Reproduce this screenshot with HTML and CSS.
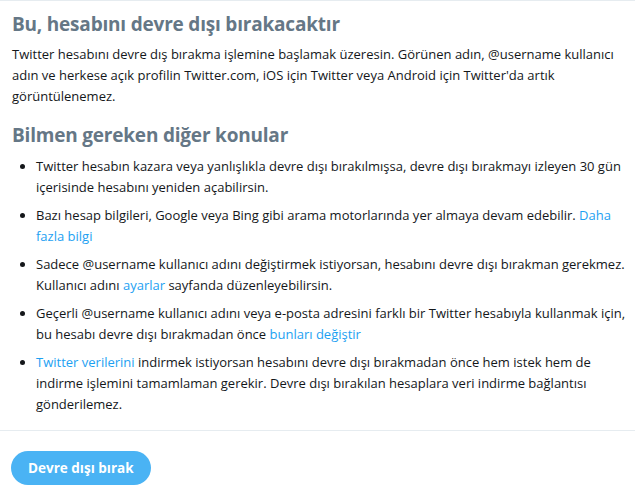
FILE: index.html
```html
<!DOCTYPE html>
<html lang="tr">
<head>
    <meta charset="UTF-8">
    <title>Hesabını devre dışı bırak</title>
    <link rel="stylesheet" href="styles.css">
</head>
<body>
    <div class="panel">
        <!-- Intro -->
        <section class="content">
            <h1>Bu, hesabını devre dışı bırakacaktır</h1>
            <p class="lead">Twitter hesabını devre dış bırakma işlemine başlamak üzeresin. Görünen adın, @username kullanıcı adın ve herkese açık profilin Twitter.com, iOS için Twitter veya Android için Twitter'da artık görüntülenemez.</p>

            <h2>Bilmen gereken diğer konular</h2>
            <ul class="notes">
                <li>Twitter hesabın kazara veya yanlışlıkla devre dışı bırakılmışsa, devre dışı bırakmayı izleyen 30 gün içerisinde hesabını yeniden açabilirsin.</li>
                <li>Bazı hesap bilgileri, Google veya Bing gibi arama motorlarında yer almaya devam edebilir. <a href="#">Daha fazla bilgi</a></li>
                <li>Sadece @username kullanıcı adını değiştirmek istiyorsan, hesabını devre dışı bırakman gerekmez. Kullanıcı adını <a href="#">ayarlar</a> sayfanda düzenleyebilirsin.</li>
                <li>Geçerli @username kullanıcı adını veya e-posta adresini farklı bir Twitter hesabıyla kullanmak için, bu hesabı devre dışı bırakmadan önce <a href="#">bunları değiştir</a></li>
                <li><a href="#">Twitter verilerini</a> indirmek istiyorsan hesabını devre dışı bırakmadan önce hem istek hem de indirme işlemini tamamlaman gerekir. Devre dışı bırakılan hesaplara veri indirme bağlantısı gönderilemez.</li>
            </ul>
        </section>

        <!-- Action -->
        <div class="actions">
            <button class="btn-primary" type="button">Devre dışı bırak</button>
        </div>
    </div>
</body>
</html>
```

FILE: styles.css
```css
/* General Styles */
body {
    margin: 0;
    padding: 0;
    font-family: 'Open Sans', 'Noto Sans', sans-serif;
    font-size: 13px;
    color: #14171a;
    background: #fff;
}
.panel {
    border-top: 1px solid #e6ecf0;
}
a {
    color: #1da1f2;
    text-decoration: none;
}

/* Content */
.content {
    padding: 11px 6px 15px 12px;
    border-bottom: 1px solid #e6ecf0;
}
h1,
h2 {
    margin: 0;
    font-size: 19px;
    line-height: 24px;
    font-weight: 700;
    letter-spacing: -0.2px;
    color: #657786;
}
.lead {
    margin: 8px 0 16px;
    line-height: 21px;
}
.notes {
    margin: 9px 0 0;
    padding-left: 24px;
}
.notes li {
    line-height: 21px;
    margin-bottom: 7px;
}
.notes li:last-child {
    margin-bottom: 0;
}

/* Action */
.actions {
    padding: 20px 11px;
}
.btn-primary {
    height: 34px;
    padding: 0 17px;
    border: none;
    border-radius: 17px;
    background: #4ab3f4;
    color: #fff;
    font-family: inherit;
    font-size: 13.5px;
    font-weight: 700;
    cursor: pointer;
}
```
